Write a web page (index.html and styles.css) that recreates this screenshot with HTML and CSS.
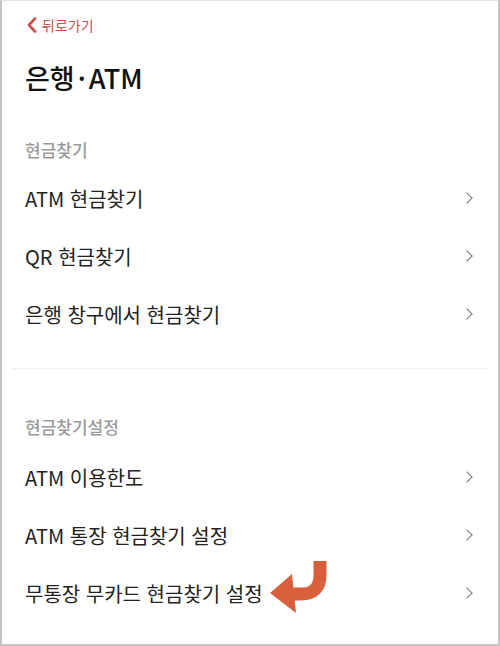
FILE: index.html
```html
<!DOCTYPE html>
<html lang="ko">
<head>
    <meta charset="UTF-8" />
    <meta name="viewport" content="width=device-width, initial-scale=1.0"/>
    <title>은행·ATM</title>
    <link rel="stylesheet" href="styles.css">
</head>
<body>
    <div class="screen">
        <a class="back" href="#">
            <svg class="back-icon" width="10" height="16" viewBox="0 0 10 16">
                <path d="M8 1.5 L2 8 L8 14.5" fill="none" stroke="#c9504f" stroke-width="2.6" stroke-linecap="round" stroke-linejoin="round"/>
            </svg>
            <span>뒤로가기</span>
        </a>

        <h1 class="title">은행<span class="dot">·</span>ATM</h1>

        <!-- 현금찾기 -->
        <section class="section first">
            <h2 class="section-label">현금찾기</h2>
            <ul class="menu">
                <li class="menu-item"><span>ATM 현금찾기</span><i class="chev"></i></li>
                <li class="menu-item"><span>QR 현금찾기</span><i class="chev"></i></li>
                <li class="menu-item"><span>은행 창구에서 현금찾기</span><i class="chev"></i></li>
            </ul>
        </section>

        <hr class="divider">

        <!-- 현금찾기설정 -->
        <section class="section second">
            <h2 class="section-label">현금찾기설정</h2>
            <ul class="menu">
                <li class="menu-item"><span>ATM 이용한도</span><i class="chev"></i></li>
                <li class="menu-item"><span>ATM 통장 현금찾기 설정</span><i class="chev"></i></li>
                <li class="menu-item marked">
                    <span>무통장 무카드 현금찾기 설정</span><i class="chev"></i>
                    <svg class="pointer" width="62" height="54" viewBox="0 0 62 54">
                        <path d="M52 1 V15 Q52 34 33 34 H18" fill="none" stroke="#d9603b" stroke-width="13"/>
                        <polygon points="2,33 24,14 28,53" fill="#d9603b"/>
                    </svg>
                </li>
            </ul>
        </section>
    </div>
</body>
</html>
```

FILE: styles.css
```css
* {
    box-sizing: border-box;
}

body {
    margin: 0;
    font-family: "Noto Sans CJK KR", "Noto Sans", sans-serif;
    background: #fff;
    color: #222;
}

.screen {
    height: 646px;
    border: 2px solid #c4c4c4;
    border-top: 1px solid #e2e2e2;
    overflow: hidden;
}

.back {
    display: flex;
    align-items: center;
    gap: 5px;
    height: 47px;
    padding-left: 25px;
    color: #c9504f;
    font-size: 14px;
    text-decoration: none;
}

.title {
    margin: 12px 0 0;
    padding-left: 23px;
    font-size: 27px;
    font-weight: 500;
    line-height: 36px;
    color: #111;
}

.title .dot {
    margin: 0 3px;
}

.section.first {
    margin-top: 43px;
    padding-bottom: 25px;
}

.section.second {
    margin-top: 47px;
}

.section-label {
    margin: 0 0 8px;
    padding-left: 23px;
    font-size: 17px;
    font-weight: 500;
    line-height: 22px;
    color: #9a9a9a;
}

.second .section-label {
    margin-bottom: 10px;
}

.menu {
    list-style: none;
    margin: 0;
    padding: 0;
}

.menu-item {
    display: flex;
    align-items: center;
    justify-content: space-between;
    height: 58px;
    padding: 0 24px 0 23px;
    font-size: 20px;
    color: #222;
}

.chev {
    width: 8px;
    height: 8px;
    margin-right: 3px;
    border-top: 1.6px solid #777;
    border-right: 1.6px solid #777;
    transform: rotate(45deg);
}

.divider {
    margin: 0 10px;
    border: none;
    border-top: 1px solid #ededed;
}

.marked {
    position: relative;
}

.pointer {
    position: absolute;
    left: 266px;
    top: -4px;
}
```
